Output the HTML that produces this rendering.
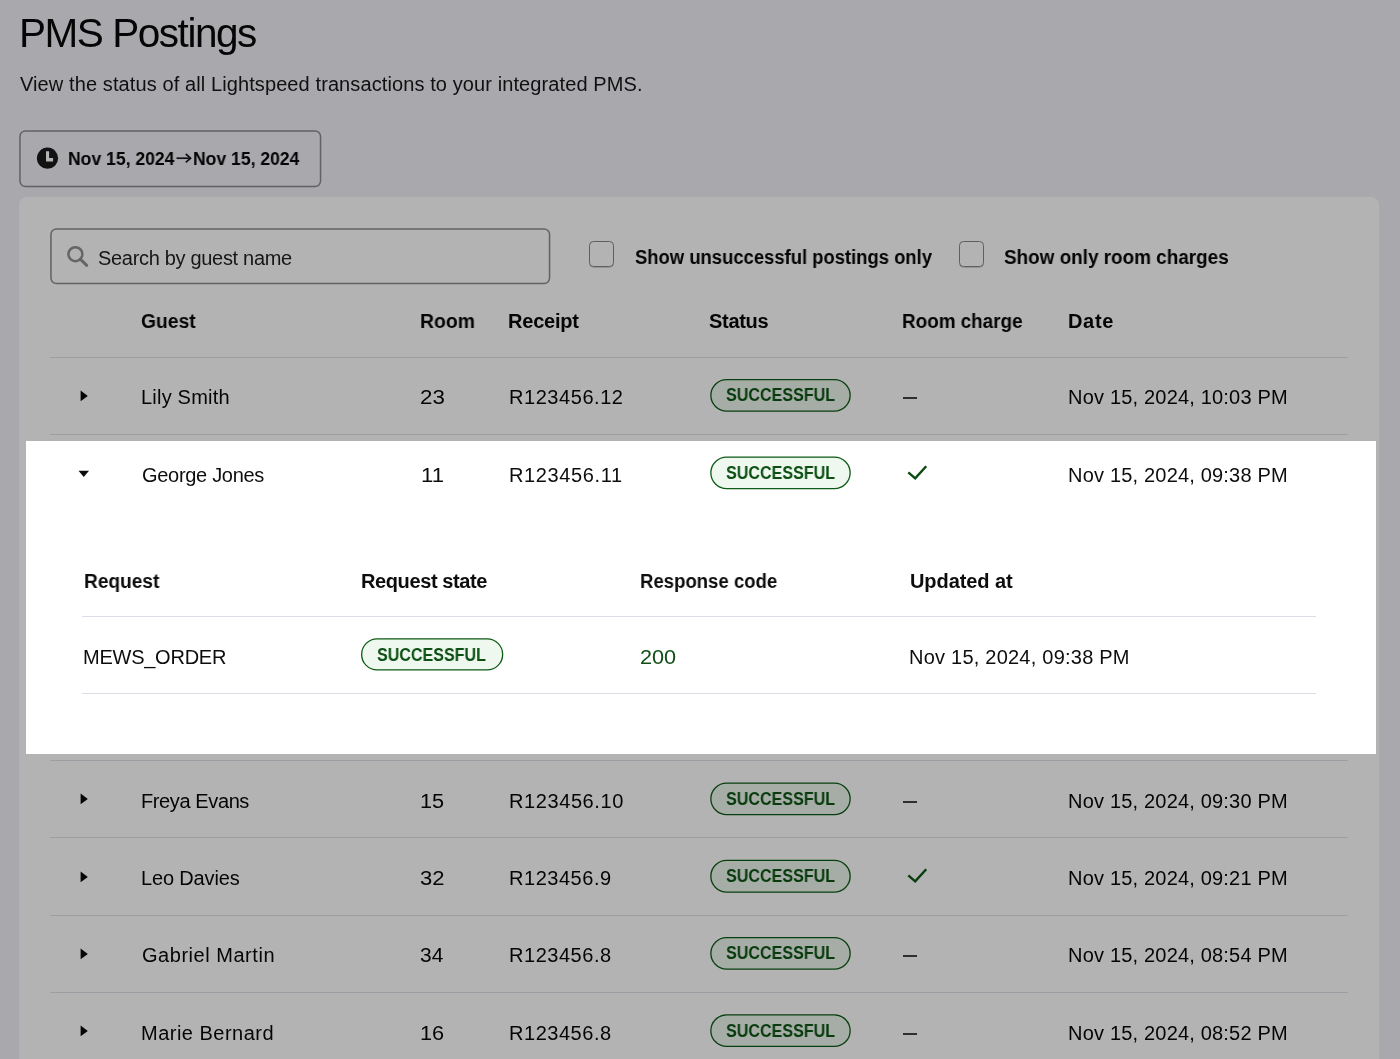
<!DOCTYPE html>
<html><head><meta charset="utf-8"><title>PMS Postings</title>
<style>
html,body{margin:0;padding:0;}
body{width:1400px;height:1059px;overflow:hidden;position:relative;background:#a9a8ad;font-family:"Liberation Sans",sans-serif;}
.t{position:absolute;line-height:1;white-space:nowrap;will-change:transform;}
.ic{position:absolute;display:block;}
.box{position:absolute;border:1px solid #6b6b6d;}
.cb{position:absolute;width:23px;height:23.5px;border:1px solid #5f5f62;border-radius:4.5px;box-shadow:0 0.6px 0 #77777a;}
.dv{position:absolute;left:50px;width:1298px;height:1px;background:#9d9da3;}
.pill{position:absolute;width:139px;height:31px;border:1px solid;border-radius:17px;box-sizing:content-box;}
</style></head><body>
<div class="t" style="left:19.00px;top:13.02px;font-size:40.5px;letter-spacing:-1.455px;color:#050505;">PMS Postings</div>
<div class="t" style="left:20.00px;top:73.87px;font-size:20px;letter-spacing:0.101px;color:#101010;">View the status of all Lightspeed transactions to your integrated PMS.</div>
<svg class="ic" style="left:19px;top:130px" width="303" height="58" viewBox="0 0 303 58"><rect x="0.95" y="0.95" width="300.6" height="55.6" rx="5.5" fill="none" stroke="#626266" stroke-width="1.5"/></svg>
<svg class="ic" style="left:36px;top:147px" width="23" height="23" viewBox="0 0 23 23"><circle cx="11.5" cy="11.2" r="10.6" fill="#121212"/><path d="M10 4.3 H13.1 V10.9 H17.1 V14.4 H10 Z" fill="#b3b2b7"/></svg>
<div class="t" style="left:67.95px;top:149.74px;font-size:18.5px;transform:scaleX(0.9495);transform-origin:0 0;font-weight:700;color:#050505;">Nov 15, 2024</div>
<svg class="ic" style="left:175px;top:152px" width="18" height="12" viewBox="0 0 18 12"><path d="M1.5 6.2 H15.2" stroke="#131313" stroke-width="1.7"/><path d="M10.8 2 L15.6 6.2 L10.8 10.4" stroke="#131313" stroke-width="1.7" fill="none"/></svg>
<div class="t" style="left:193.35px;top:149.74px;font-size:18.5px;transform:scaleX(0.9486);transform-origin:0 0;font-weight:700;color:#050505;">Nov 15, 2024</div>
<div style="position:absolute;left:19px;top:197px;width:1360px;height:900px;background:#b3b3b3;border-radius:8px;"></div>
<svg class="ic" style="left:50px;top:228px" width="501" height="57" viewBox="0 0 501 57"><rect x="0.95" y="0.95" width="498.6" height="54.6" rx="5.5" fill="none" stroke="#626266" stroke-width="1.5"/></svg>
<svg class="ic" style="left:64px;top:244px" width="28" height="26" viewBox="0 0 28 26"><circle cx="11.4" cy="10.2" r="7" stroke="#656568" stroke-width="2.5" fill="none"/><path d="M16.3 15.1 L22.7 21.3" stroke="#656568" stroke-width="3" stroke-linecap="round"/></svg>
<div class="t" style="left:97.90px;top:247.77px;font-size:20px;letter-spacing:-0.311px;color:#161616;">Search by guest name</div>
<div class="cb" style="left:589px;top:241px;"></div>
<div class="t" style="left:635.08px;top:247.27px;font-size:20px;transform:scaleX(0.9215);transform-origin:0 0;font-weight:700;color:#050505;">Show unsuccessful postings only</div>
<div class="cb" style="left:958.5px;top:241px;"></div>
<div class="t" style="left:1004.06px;top:247.27px;font-size:20px;transform:scaleX(0.9449);transform-origin:0 0;font-weight:700;color:#050505;">Show only room charges</div>
<div class="t" style="left:140.64px;top:311.47px;font-size:20px;transform:scaleX(0.9643);transform-origin:0 0;font-weight:700;color:#050505;">Guest</div>
<div class="t" style="left:419.63px;top:311.47px;font-size:20px;transform:scaleX(0.9673);transform-origin:0 0;font-weight:700;color:#050505;">Room</div>
<div class="t" style="left:508.30px;top:311.47px;font-size:20px;font-weight:700;letter-spacing:-0.217px;color:#050505;">Receipt</div>
<div class="t" style="left:708.50px;top:311.47px;font-size:20px;font-weight:700;letter-spacing:-0.300px;color:#050505;">Status</div>
<div class="t" style="left:901.86px;top:311.47px;font-size:20px;transform:scaleX(0.9429);transform-origin:0 0;font-weight:700;color:#050505;">Room charge</div>
<div class="t" style="left:1067.70px;top:311.47px;font-size:20px;font-weight:700;letter-spacing:0.667px;color:#050505;">Date</div>
<div class="dv" style="top:357px"></div>
<div class="dv" style="top:434px"></div>
<div class="dv" style="top:760px"></div>
<div class="dv" style="top:837px"></div>
<div class="dv" style="top:915px"></div>
<div class="dv" style="top:992px"></div>
<div style="position:absolute;left:26px;top:441px;width:1350px;height:313px;background:#fff;"></div>
<svg class="ic" style="left:80px;top:389.90px" width="9" height="12" viewBox="0 0 9 12"><path d="M0.6 0.5 V11.3 L7.8 5.9 Z" fill="#050505"/></svg>
<div class="t" style="left:141.00px;top:387.37px;font-size:20px;letter-spacing:0.211px;color:#050505;">Lily Smith</div>
<div class="t" style="left:419.78px;top:387.37px;font-size:20px;transform:scaleX(1.1150);transform-origin:0 0;color:#050505;">23</div>
<div class="t" style="left:508.50px;top:387.37px;font-size:20px;letter-spacing:0.556px;color:#050505;">R123456.12</div>
<svg class="ic" style="left:710px;top:378px" width="142" height="35" viewBox="0 0 142 35"><rect x="0.85" y="1.55" width="139.30" height="31.60" rx="15.80" fill="#a6ada6" stroke="#083f0e" stroke-width="1.3"/></svg>
<div class="t" style="left:725.51px;top:386.36px;font-size:18px;transform:scaleX(0.8942);transform-origin:0 0;font-weight:700;color:#073a0c;">SUCCESSFUL</div>
<div style="position:absolute;left:903px;top:397px;width:14px;height:2px;background:#2e2e2e"></div>
<div class="t" style="left:1067.50px;top:387.37px;font-size:20px;letter-spacing:0.190px;color:#050505;">Nov 15, 2024, 10:03 PM</div>
<svg class="ic" style="left:78px;top:470.00px" width="12" height="8" viewBox="0 0 12 8"><path d="M0.5 0.8 H11 L5.75 7 Z" fill="#0d0d0d"/></svg>
<div class="t" style="left:142.00px;top:464.87px;font-size:20px;letter-spacing:-0.300px;color:#0d0d0d;">George Jones</div>
<div class="t" style="left:420.79px;top:464.87px;font-size:20px;transform:scaleX(1.1053);transform-origin:0 0;color:#0d0d0d;">11</div>
<div class="t" style="left:508.50px;top:464.87px;font-size:20px;letter-spacing:0.633px;color:#0d0d0d;">R123456.11</div>
<svg class="ic" style="left:710px;top:456px" width="142" height="35" viewBox="0 0 142 35"><rect x="0.85" y="1.05" width="139.30" height="31.60" rx="15.80" fill="#eef8ee" stroke="#0c5a15" stroke-width="1.3"/></svg>
<div class="t" style="left:725.51px;top:463.86px;font-size:18px;transform:scaleX(0.8942);transform-origin:0 0;font-weight:700;color:#0b4f12;">SUCCESSFUL</div>
<svg class="ic" style="left:905px;top:463.00px" width="24" height="19" viewBox="0 0 24 19"><path d="M3.3 9.4 L10.2 15.4 L21.2 3.2" stroke="#0a4a10" stroke-width="2.4" fill="none"/></svg>
<div class="t" style="left:1067.50px;top:464.87px;font-size:20px;letter-spacing:0.190px;color:#0d0d0d;">Nov 15, 2024, 09:38 PM</div>
<svg class="ic" style="left:80px;top:793.40px" width="9" height="12" viewBox="0 0 9 12"><path d="M0.6 0.5 V11.3 L7.8 5.9 Z" fill="#050505"/></svg>
<div class="t" style="left:141.00px;top:790.87px;font-size:20px;letter-spacing:-0.390px;color:#050505;">Freya Evans</div>
<div class="t" style="left:419.81px;top:790.87px;font-size:20px;transform:scaleX(1.0850);transform-origin:0 0;color:#050505;">15</div>
<div class="t" style="left:508.50px;top:790.87px;font-size:20px;letter-spacing:0.589px;color:#050505;">R123456.10</div>
<svg class="ic" style="left:710px;top:782px" width="142" height="35" viewBox="0 0 142 35"><rect x="0.85" y="1.05" width="139.30" height="31.60" rx="15.80" fill="#a6ada6" stroke="#083f0e" stroke-width="1.3"/></svg>
<div class="t" style="left:725.51px;top:789.86px;font-size:18px;transform:scaleX(0.8942);transform-origin:0 0;font-weight:700;color:#073a0c;">SUCCESSFUL</div>
<div style="position:absolute;left:903px;top:801px;width:14px;height:2px;background:#2e2e2e"></div>
<div class="t" style="left:1067.50px;top:790.87px;font-size:20px;letter-spacing:0.190px;color:#050505;">Nov 15, 2024, 09:30 PM</div>
<svg class="ic" style="left:80px;top:870.80px" width="9" height="12" viewBox="0 0 9 12"><path d="M0.6 0.5 V11.3 L7.8 5.9 Z" fill="#050505"/></svg>
<div class="t" style="left:141.00px;top:868.27px;font-size:20px;letter-spacing:-0.156px;color:#050505;">Leo Davies</div>
<div class="t" style="left:419.80px;top:868.27px;font-size:20px;transform:scaleX(1.1000);transform-origin:0 0;color:#050505;">32</div>
<div class="t" style="left:508.50px;top:868.27px;font-size:20px;letter-spacing:0.537px;color:#050505;">R123456.9</div>
<svg class="ic" style="left:710px;top:859px" width="142" height="35" viewBox="0 0 142 35"><rect x="0.85" y="1.45" width="139.30" height="31.60" rx="15.80" fill="#a6ada6" stroke="#083f0e" stroke-width="1.3"/></svg>
<div class="t" style="left:725.51px;top:867.26px;font-size:18px;transform:scaleX(0.8942);transform-origin:0 0;font-weight:700;color:#073a0c;">SUCCESSFUL</div>
<svg class="ic" style="left:905px;top:866.40px" width="24" height="19" viewBox="0 0 24 19"><path d="M3.3 9.4 L10.2 15.4 L21.2 3.2" stroke="#073d0c" stroke-width="2.4" fill="none"/></svg>
<div class="t" style="left:1067.50px;top:868.27px;font-size:20px;letter-spacing:0.190px;color:#050505;">Nov 15, 2024, 09:21 PM</div>
<svg class="ic" style="left:80px;top:947.90px" width="9" height="12" viewBox="0 0 9 12"><path d="M0.6 0.5 V11.3 L7.8 5.9 Z" fill="#050505"/></svg>
<div class="t" style="left:142.00px;top:945.37px;font-size:20px;letter-spacing:0.531px;color:#050505;">Gabriel Martin</div>
<div class="t" style="left:419.85px;top:945.37px;font-size:20px;transform:scaleX(1.0476);transform-origin:0 0;color:#050505;">34</div>
<div class="t" style="left:508.50px;top:945.37px;font-size:20px;letter-spacing:0.537px;color:#050505;">R123456.8</div>
<svg class="ic" style="left:710px;top:936px" width="142" height="35" viewBox="0 0 142 35"><rect x="0.85" y="1.55" width="139.30" height="31.60" rx="15.80" fill="#a6ada6" stroke="#083f0e" stroke-width="1.3"/></svg>
<div class="t" style="left:725.51px;top:944.36px;font-size:18px;transform:scaleX(0.8942);transform-origin:0 0;font-weight:700;color:#073a0c;">SUCCESSFUL</div>
<div style="position:absolute;left:903px;top:955px;width:14px;height:2px;background:#2e2e2e"></div>
<div class="t" style="left:1067.50px;top:945.37px;font-size:20px;letter-spacing:0.190px;color:#050505;">Nov 15, 2024, 08:54 PM</div>
<svg class="ic" style="left:80px;top:1025.20px" width="9" height="12" viewBox="0 0 9 12"><path d="M0.6 0.5 V11.3 L7.8 5.9 Z" fill="#050505"/></svg>
<div class="t" style="left:141.00px;top:1022.67px;font-size:20px;letter-spacing:0.483px;color:#050505;">Marie Bernard</div>
<div class="t" style="left:419.81px;top:1022.67px;font-size:20px;transform:scaleX(1.0850);transform-origin:0 0;color:#050505;">16</div>
<div class="t" style="left:508.50px;top:1022.67px;font-size:20px;letter-spacing:0.537px;color:#050505;">R123456.8</div>
<svg class="ic" style="left:710px;top:1014px" width="142" height="35" viewBox="0 0 142 35"><rect x="0.85" y="0.85" width="139.30" height="31.60" rx="15.80" fill="#a6ada6" stroke="#083f0e" stroke-width="1.3"/></svg>
<div class="t" style="left:725.51px;top:1021.66px;font-size:18px;transform:scaleX(0.8942);transform-origin:0 0;font-weight:700;color:#073a0c;">SUCCESSFUL</div>
<div style="position:absolute;left:903px;top:1033px;width:14px;height:2px;background:#2e2e2e"></div>
<div class="t" style="left:1067.50px;top:1022.67px;font-size:20px;letter-spacing:0.190px;color:#050505;">Nov 15, 2024, 08:52 PM</div>
<div class="t" style="left:83.54px;top:570.67px;font-size:20px;transform:scaleX(0.9551);transform-origin:0 0;font-weight:700;color:#0d0d0d;">Request</div>
<div class="t" style="left:360.90px;top:570.67px;font-size:20px;font-weight:700;letter-spacing:-0.392px;color:#0d0d0d;">Request state</div>
<div class="t" style="left:639.97px;top:570.67px;font-size:20px;transform:scaleX(0.9281);transform-origin:0 0;font-weight:700;color:#0d0d0d;">Response code</div>
<div class="t" style="left:909.50px;top:570.67px;font-size:20px;font-weight:700;letter-spacing:-0.078px;color:#0d0d0d;">Updated at</div>
<div style="position:absolute;left:82px;width:1234px;top:616px;height:1px;background:#dedde7"></div>
<div style="position:absolute;left:82px;width:1234px;top:693px;height:1px;background:#dedde7"></div>
<div class="t" style="left:82.50px;top:646.57px;font-size:20px;letter-spacing:-0.244px;color:#0d0d0d;">MEWS_ORDER</div>
<svg class="ic" style="left:361px;top:638px" width="144" height="34" viewBox="0 0 144 34"><rect x="0.65" y="0.85" width="141.00" height="31.10" rx="15.55" fill="#eef8ee" stroke="#0c5a15" stroke-width="1.3"/></svg>
<div class="t" style="left:376.61px;top:645.56px;font-size:18px;transform:scaleX(0.8926);transform-origin:0 0;font-weight:700;color:#0b4f12;">SUCCESSFUL</div>
<div class="t" style="left:639.82px;top:646.57px;font-size:20px;transform:scaleX(1.0813);transform-origin:0 0;color:#0f4f16;">200</div>
<div class="t" style="left:908.50px;top:646.57px;font-size:20px;letter-spacing:0.229px;color:#0d0d0d;">Nov 15, 2024, 09:38 PM</div>
</body></html>
